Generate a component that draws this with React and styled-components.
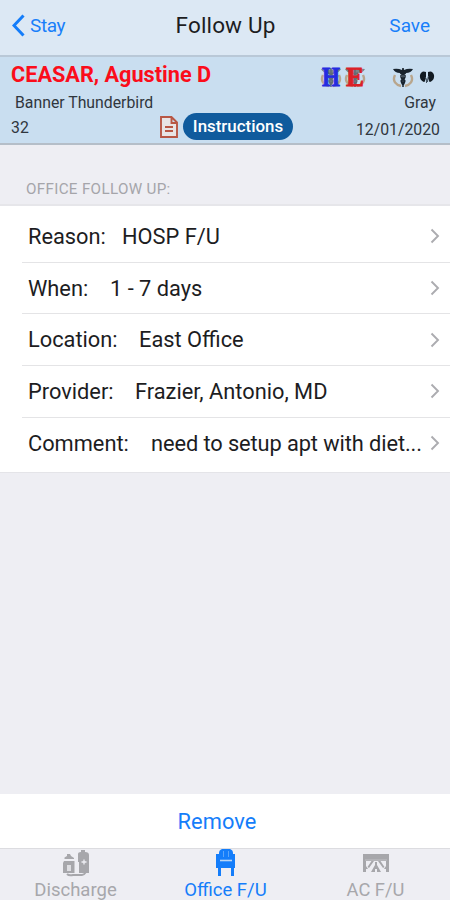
import React from 'react';
import styled, { createGlobalStyle } from 'styled-components';

const Global = createGlobalStyle`
  * { box-sizing: border-box; }
  body { margin: 0; background: #eeeef3; font-family: Roboto, sans-serif; }
`;
const Screen = styled.div`
  width: 450px; height: 900px; overflow: hidden;
  display: flex; flex-direction: column; background: #eeeef3; color: #1d1d1f;
`;
const Svg = styled.svg`display: block; flex: none;`;
const NavBar = styled.header`
  height: 57px; flex: none; display: grid; grid-template-columns: 1fr auto 1fr;
  align-items: center; padding: 0 20px 5px 12px; background: #dce8f4;
  border-bottom: 2px solid #b9c8d7;
`;
const NavButton = styled.button`
  border: 0; background: none; padding: 1px 0 0; font: 400 19px/24px Roboto, sans-serif;
  letter-spacing: ${p => p.$spacing || 0}px;
  color: #187ffa; display: flex; align-items: center; gap: 5px;
  justify-self: ${p => (p.$end ? 'end' : 'start')};
`;
const Title = styled.h1`
  margin: 0 0 0 9px; font-size: 22.5px; line-height: 28px; font-weight: 400; letter-spacing: 0.15px;
`;
const Patient = styled.section`
  height: 88px; flex: none; background: #c9def0; border-bottom: 2px solid #b5bec8;
  padding: 4px 10px 0 12px; display: grid; grid-template-rows: 28px 27px 26px;
`;
const Line = styled.div`
  display: flex; align-items: center; justify-content: space-between;
`;
const VisitLine = styled(Line)`align-items: flex-start; margin-top: -3px;`;
const Name = styled.strong`
  font-size: 21.7px; line-height: 26px; font-weight: 700; color: #fb0d1b; margin-left: -1px;
`;
const Badges = styled.div`display: flex; align-items: center; margin: 4px 5px 0 0;`;
const BadgeGap = styled.span`width: ${p => p.$width}px;`;
const Meta = styled.span`
  font-size: 15.8px; line-height: 20px; color: #30363d;
  margin: 0 ${p => p.$right || 0}px 0 ${p => p.$left || 0}px;
  padding-top: ${p => p.$drop || 0}px;
`;
const Age = styled(Meta)`width: 148px; margin-left: -1px; margin-right: 1px;`;
const ReportBox = styled.span`padding-top: 3px;`;
const Pill = styled.button`
  width: 110px; height: 27px; border: 0; border-radius: 14px; padding: 0; margin: 0 auto 0 5px;
  background: #105b9d; color: #fff; font: 500 16.900px/27px Roboto, sans-serif; letter-spacing: 0;
`;
const SectionTitle = styled.h2`
  flex: none; height: 61px; margin: 0; padding: 34px 0 0 26px; font-size: 15.2px; line-height: 20px;
  font-weight: 400; color: #a5a5aa; letter-spacing: 0.32px; border-bottom: 2px solid #e6e6ea;
`;
const List = styled.div`
  flex: none; height: 267px; background: #fff; display: flex; flex-direction: column;
  padding: 4px 0 0 22px; border-bottom: 1px solid #e4e4e8;
`;
const Row = styled.div`
  height: 51.7px; flex: none; display: flex; align-items: center; padding: 0 10px 0 6px;
  font-size: 21.8px; line-height: 28px;
  & + & { border-top: 1.5px solid #e4e4e6; }
`;
const Label = styled.span`flex: none; width: ${p => p.$width}px; padding-top: 1.500px; white-space: nowrap;`;
const Value = styled.span`
  flex: 1; padding-top: 1.500px; white-space: nowrap;
  ${p => p.$tight && 'letter-spacing: -0.09px;'}
`;
const RemoveButton = styled.button`
  margin-top: auto; flex: none; height: 55px; border: 0; border-bottom: 1px solid #dcdce0; padding: 1px 16px 0 0;
  background: #fff; color: #147dfa; font: 400 21.8px/28px Roboto, sans-serif; letter-spacing: 0.1px;
`;
const Tabs = styled.nav`flex: none; height: 51px; display: grid; grid-template-columns: repeat(3, 1fr);`;
const Tab = styled.div`
  display: flex; flex-direction: column; align-items: center; justify-content: space-between;
  color: ${p => (p.$active ? '#147dfa' : '#a7a7ab')};
  font-size: ${p => p.$size}px; line-height: 20px;
  padding-left: 1px;
`;
const TabIcon = styled.span`height: 28px; display: flex; align-items: center;`;

const Back = () => (
  <Svg width="13" height="23" viewBox="0 0 13 23"><path d="M11.5 1.5 2 11.5l9.5 10" fill="none" stroke="#147dfa" strokeWidth="3" /></Svg>
);
const Chevron = () => (
  <Svg width="10" height="16" viewBox="0 0 10 16"><path d="m1.5 1.5 6.5 6.5-6.5 6.5" fill="none" stroke="#acacb0" strokeWidth="1.9" /></Svg>
);
const Medical = ({ letter, color }) => (
  <Svg width="24" height="36" viewBox="0 -5 24 36">
    <path d="M4 11c-3 6 1 10 6 11M20 11c3 6-1 10-6 11" fill="none" stroke="#b9a68d" strokeWidth="2.4" />
    <path d="M2 5q5-1 9 1l1-2 1 2q4-2 9-1-2 4-7 4H9Q4 9 2 5" fill={letter ? '#7b858c' : '#18232d'} />
    <path d="M12 4v19M9 9q6 1 5 4t-3 3 1 5M15 9q-6 1-5 4t3 3-1 5" fill="none" stroke={letter ? '#626d75' : '#18232d'} strokeWidth="1.5" />
    {letter && (
      <text x="3" y="22" textLength="18" lengthAdjust="spacingAndGlyphs" fontFamily="Liberation Serif, serif" fontWeight="700" fontSize="27" fill={color} stroke={color} strokeWidth="0.800">{letter}</text>
    )}
  </Svg>
);
const Kidneys = () => (
  <Svg width="16" height="14" viewBox="0 0 16 14">
    <path d="M7 2v6l-1.500 4C2 11.500 .5 8 1 5Q2.500 0 7 2M9 2v6l1.500 4c3.500-.5 5-4 4.500-7Q13.500 0 9 2" fill="#111a22" />
    <path d="M6 7q2 1 1.500 6M9.500 6q-1 2-1 6" stroke="#40505e" fill="none" />
  </Svg>
);
const Report = () => (
  <Svg width="18" height="22" viewBox="0 0 18 22">
    <path d="M1 1h10.500l5.500 5.500V21H1ZM11.500 1v6H17M5 11h8M5 15h8" fill="#e8e4e5" stroke="#b85745" strokeWidth="1.900" />
  </Svg>
);
const DischargeIcon = () => (
  <Svg width="28" height="28" viewBox="0 0 28 28" fill="#a7a7ab">
    <path d="M2.500 10V8.500L5 7V5h3l1 2 3 2v1ZM2 12h10.500v12H1V14ZM16 5q0-2 3-2V1h4v2q4 0 4 3v18H17V13h-1Z" />
    <path d="M5 16h4v6H5Z" fill="#dedee2" />
    <path d="M19.500 13h5M22 10.500v5" stroke="#eeeef3" strokeWidth="1.300" />
    <path d="M5 25q2 2 6 1h9q2 0 4-3" fill="none" stroke="#a7a7ab" strokeWidth="2" />
  </Svg>
);
const ChairIcon = () => (
  <Svg width="22" height="28" viewBox="0 0 22 28" fill="#147dfa">
    <path d="M7 0h8q3 1 3 4v1h2v14h-1v8h-3v-8H6v8H3v-8H1V5h3V4Q4 1 7 0Z" />
    <path d="M5 11.500h12" stroke="#b9d6f5" strokeWidth="1.600" />
    <path d="M8.500 2v6M13.500 2v6" stroke="#5ba5fa" strokeWidth="1" />
  </Svg>
);
const CenterIcon = () => (
  <Svg width="28" height="20" viewBox="0 0 28 20" fill="#a7a7ab">
    <path d="M1 1h26v18h-3v-3h-2l2-3V8h-5.500l4 6-1.500 1L16 8h-4l-5 7-1.500-1 4-6H4v5l2 3H4v3H1Z" />
    <path d="M13 9h2v3l4 7h-4v-3h-2v3H9l4-7Z" />
    <path d="M3 7h22" stroke="#c1c1c5" strokeWidth="1" />
  </Svg>
);

const fields = [
  { label: 'Reason:', value: 'HOSP F/U', width: 94 },
  { label: 'When:', value: '1 - 7 days', width: 82 },
  { label: 'Location:', value: 'East Office', width: 111 },
  { label: 'Provider:', value: 'Frazier, Antonio, MD', width: 107 },
  { label: 'Comment:', value: 'need to setup apt with diet...', width: 123, tight: true },
];

export default function App() {
  return (
    <>
      <Global />
      <Screen>
        <NavBar>
          <NavButton $spacing={-0.4}><Back />Stay</NavButton>
          <Title>Follow Up</Title>
          <NavButton $end>Save</NavButton>
        </NavBar>
        <Patient>
          <Line>
            <Name>CEASAR, Agustine D</Name>
            <Badges>
              <Medical letter="H" color="#252be0" /><Medical letter="E" color="#db2027" />
              <BadgeGap $width={24} /><Medical /><BadgeGap $width={4} /><Kidneys />
            </Badges>
          </Line>
          <Line><Meta $left={3}>Banner Thunderbird</Meta><Meta $right={4}>Gray</Meta></Line>
          <VisitLine>
            <Age $drop={5}>32</Age><ReportBox><Report /></ReportBox><Pill>Instructions</Pill><Meta $drop={7}>12/01/2020</Meta>
          </VisitLine>
        </Patient>
        <SectionTitle>OFFICE FOLLOW UP:</SectionTitle>
        <List>
          {fields.map(f => (
            <Row key={f.label}>
              <Label $width={f.width}>{f.label}</Label>
              <Value $tight={f.tight}>{f.value}</Value>
              <Chevron />
            </Row>
          ))}
        </List>
        <RemoveButton>Remove</RemoveButton>
        <Tabs>
          <Tab $size={18.5}><TabIcon><DischargeIcon /></TabIcon>Discharge</Tab>
          <Tab $active $size={18.5}><TabIcon><ChairIcon /></TabIcon>Office F/U</Tab>
          <Tab $size={18.3}><TabIcon><CenterIcon /></TabIcon>AC F/U</Tab>
        </Tabs>
      </Screen>
    </>
  );
}
